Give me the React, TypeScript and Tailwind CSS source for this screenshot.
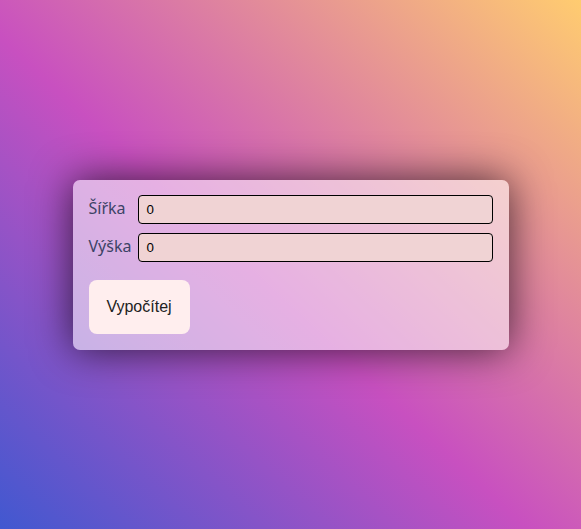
export default function App() {
  return (
    <div className="flex min-h-[529px] w-full items-center justify-center bg-[linear-gradient(43deg,#4158D0_0%,#C850C0_46%,#FFCC70_100%)]">
      <form
        onSubmit={(e) => e.preventDefault()}
        className="w-[436px] rounded-[7px] bg-white/55 px-4 pb-4 pt-[15px] shadow-[0_0_40px_rgba(0,0,0,0.7)]"
      >
        <div className="grid grid-cols-[auto_1fr] gap-x-[7px] gap-y-[9px]">
          <label className="-mt-[3px] self-center font-['Noto_Sans',sans-serif] text-base text-[#3c4366]">
            Šířka
          </label>
          <input
            defaultValue="0"
            className="h-[29px] w-full rounded-[4px] border border-black bg-[#f0d3d4] px-[7px] font-['Liberation_Sans',Arial,sans-serif] text-[13.3px] text-black outline-none"
          />
          <label className="-mt-[3px] self-center font-['Noto_Sans',sans-serif] text-base text-[#3c4366]">
            Výška
          </label>
          <input
            defaultValue="0"
            className="h-[29px] w-full rounded-[4px] border border-black bg-[#f0d3d4] px-[7px] font-['Liberation_Sans',Arial,sans-serif] text-[13.3px] text-black outline-none"
          />
        </div>
        <button
          type="submit"
          className="mt-[18px] h-[54px] w-[101px] rounded-[8px] bg-[#ffeeee] font-['Liberation_Sans',Arial,sans-serif] text-base text-[#222]"
        >
          Vypočítej
        </button>
      </form>
    </div>
  );
}
